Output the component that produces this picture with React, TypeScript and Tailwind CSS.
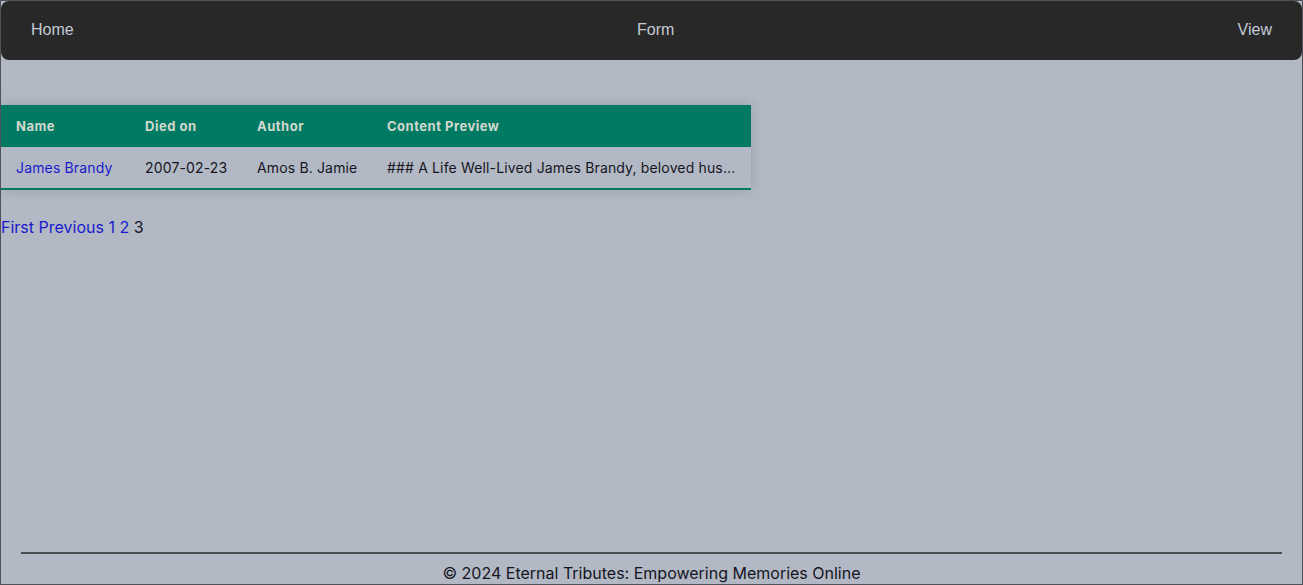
import React from "react";

const rows = [
  {
    name: "James Brandy",
    died: "2007-02-23",
    author: "Amos B. Jamie",
    preview: "### A Life Well-Lived James Brandy, beloved hus...",
  },
];

export default function App() {
  return (
    <div className="h-[585px] flex flex-col overflow-hidden border border-[#4f5258] bg-[#b3b9c4] font-['Inter',sans-serif]">
      <nav className="h-[59px] shrink-0 flex items-center justify-between px-[30px] pb-[2px] rounded-lg bg-[#282828] text-[16px] text-[#c3cbd6] font-['Liberation_Sans',sans-serif]">
        <a href="#">Home</a>
        <a href="#">Form</a>
        <a href="#">View</a>
      </nav>

      <main className="flex-1">
        <table className="mt-[45px] w-[750px] table-fixed border-collapse text-[14px] shadow-[0_0_12px_rgba(0,0,0,0.15)]">
          <thead>
            <tr className="h-[42px] bg-[#007a62] text-left text-[13px] font-bold tracking-[0.5px] text-[#d3d8cf]">
              <th className="w-[129px] pl-[15px] pt-[2px]">Name</th>
              <th className="w-[112px] pl-[15px] pt-[2px]">Died on</th>
              <th className="w-[130px] pl-[15px] pt-[2px]">Author</th>
              <th className="pl-[15px] pt-[2px]">Content Preview</th>
            </tr>
          </thead>
          <tbody>
            {rows.map((r) => (
              <tr key={r.name} className="h-[42px] border-b-2 border-[#007a62] tracking-[0.15px] text-[#15151f]">
                <td className="pl-[15px]">
                  <a href="#" className="text-[#1a1acc]">
                    {r.name}
                  </a>
                </td>
                <td className="pl-[15px]">{r.died}</td>
                <td className="pl-[15px]">{r.author}</td>
                <td className="pl-[15px] whitespace-nowrap">{r.preview}</td>
              </tr>
            ))}
          </tbody>
        </table>

        <div className="mt-[25px] text-[16px] leading-6 text-[#15151f]">
          <a href="#" className="text-[#1a1acc]">First</a>{" "}
          <a href="#" className="text-[#1a1acc]">Previous</a>{" "}
          <a href="#" className="text-[#1a1acc]">1</a>{" "}
          <a href="#" className="text-[#1a1acc]">2</a> <span>3</span>
        </div>
      </main>

      <footer className="shrink-0 h-[32px] px-5 text-center">
        <hr className="border-t-2 border-[#4a4d52]" />
        <p className="mt-[7px] text-[16px] leading-6 text-[#15151f]">
          © 2024 Eternal Tributes: Empowering Memories Online
        </p>
      </footer>
    </div>
  );
}
